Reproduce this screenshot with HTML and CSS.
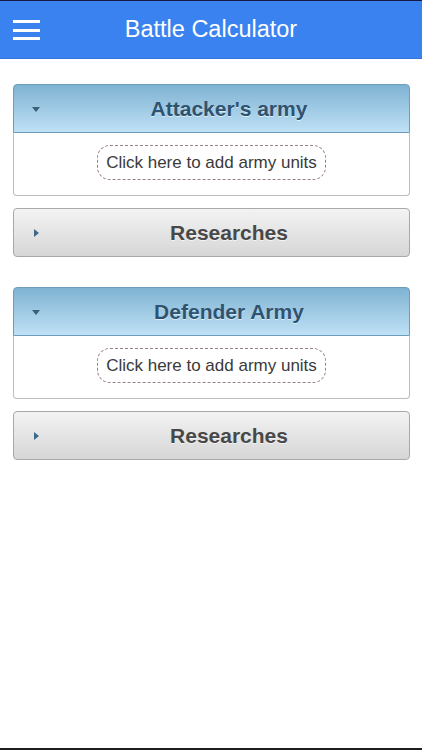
FILE: index.html
```html
<!DOCTYPE html>
<html lang="en">
<head>
    <meta charset="UTF-8">
    <meta name="viewport" content="width=device-width, initial-scale=1.0">
    <title>Battle Calculator</title>
    <link rel="stylesheet" href="styles.css">
</head>
<body>
    <div class="header">
        <button class="menu-button" type="button">
            <span></span><span></span><span></span>
        </button>
        <h1>Battle Calculator</h1>
    </div>

    <div class="page">
        <div class="collapsible open">
            <h2 class="collapsible-heading army"><span class="arrow down"></span>Attacker's army</h2>
            <div class="collapsible-content">
                <a href="#" class="add-units">Click here to add army units</a>
            </div>
        </div>
        <div class="collapsible">
            <h2 class="collapsible-heading research"><span class="arrow right"></span>Researches</h2>
        </div>

        <div class="collapsible open second">
            <h2 class="collapsible-heading army"><span class="arrow down"></span>Defender Army</h2>
            <div class="collapsible-content">
                <a href="#" class="add-units">Click here to add army units</a>
            </div>
        </div>
        <div class="collapsible">
            <h2 class="collapsible-heading research"><span class="arrow right"></span>Researches</h2>
        </div>
    </div>
</body>
</html>
```

FILE: styles.css
```css
* {
    box-sizing: border-box;
}

html, body {
    height: 100%;
}

body {
    margin: 0;
    font-family: 'Liberation Sans', Arial, sans-serif;
    background: #fff;
    border-bottom: 2px solid #1e1e1e;
}

.header {
    position: relative;
    height: 59px;
    background: #3b82f1;
    border-top: 1px solid #151a45;
    border-bottom: 1px solid #3577de;
    display: flex;
    align-items: center;
    justify-content: center;
}

.header h1 {
    margin: 0;
    color: #fff;
    font-size: 23.5px;
    font-weight: normal;
}

.menu-button {
    position: absolute;
    left: 13px;
    top: 19px;
    width: 27px;
    height: 20px;
    padding: 0;
    border: none;
    background: none;
    display: flex;
    flex-direction: column;
    justify-content: space-between;
}

.menu-button span {
    display: block;
    height: 3px;
    background: #fff;
}

.page {
    padding: 25px 12px 0 13px;
}

.collapsible {
    margin-bottom: 12px;
}

.collapsible.second {
    margin-top: 30px;
}

.collapsible-heading {
    position: relative;
    margin: 0;
    height: 49px;
    padding: 0 5px 0 40px;
    display: flex;
    align-items: center;
    justify-content: center;
    font-size: 21px;
    font-weight: bold;
    text-shadow: 0 1px 0 rgba(255, 255, 255, 0.6);
}

.collapsible-heading.army {
    color: #2e5370;
    background: linear-gradient(to bottom, #7fb2d2, #bfe1f6);
    border: 1px solid #6e9cbb;
    border-radius: 4px 4px 0 0;
}

.collapsible-heading.research {
    color: #484848;
    background: linear-gradient(to bottom, #f3f3f3, #d6d6d6);
    border: 1px solid #a8a8a8;
    border-radius: 4px;
}

.arrow {
    position: absolute;
    top: 50%;
    width: 0;
    height: 0;
}

.arrow.down {
    left: 18px;
    margin-top: -2px;
    border-left: 4px solid transparent;
    border-right: 4px solid transparent;
    border-top: 5px solid #3c5f78;
}

.arrow.right {
    left: 20px;
    margin-top: -4px;
    border-top: 4px solid transparent;
    border-bottom: 4px solid transparent;
    border-left: 5px solid #3d6a8a;
}

.collapsible-content {
    height: 63px;
    padding-top: 12px;
    border: 1px solid #bcbcbc;
    border-top: none;
    border-radius: 0 0 4px 4px;
    text-align: center;
}

.add-units {
    display: inline-block;
    height: 35px;
    line-height: 33px;
    padding: 0 8px;
    border: 1px dashed #9c7c86;
    border-radius: 13px;
    color: #3a3a3a;
    font-size: 17px;
    text-decoration: none;
}
```
